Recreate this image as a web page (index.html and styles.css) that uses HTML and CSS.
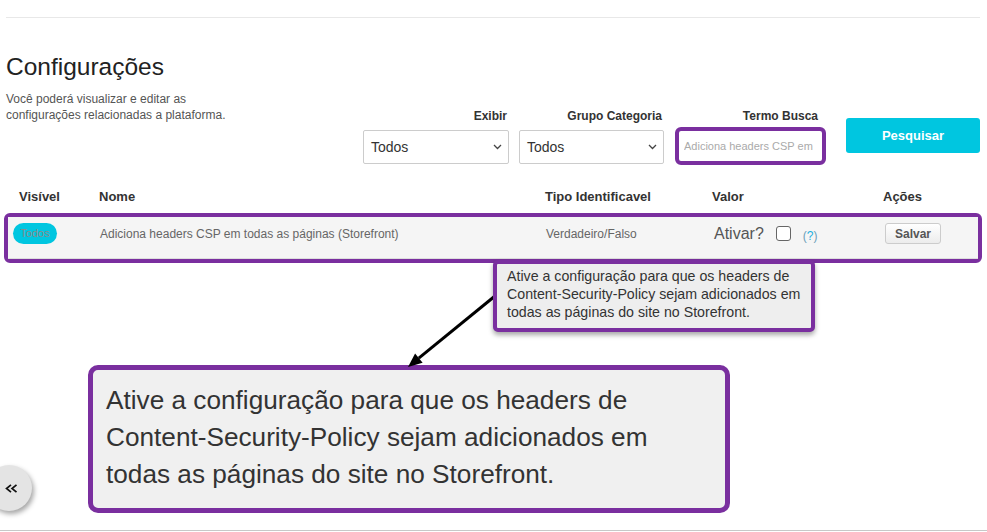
FILE: index.html
```html
<!DOCTYPE html>
<html lang="pt-BR">
<head>
<meta charset="utf-8">
<title>Configurações</title>
<link rel="stylesheet" href="styles.css">
</head>
<body>
<div class="page">
  <hr class="top-rule">
  <h1 class="title">Configurações</h1>
  <div class="intro-row">
    <p class="subtitle">Você poderá visualizar e editar as<br>configurações relacionadas a plataforma.</p>
    <div class="filters">
      <div class="field field-exibir">
        <label class="field-label">Exibir</label>
        <div class="select"><span>Todos</span><svg class="chev" width="9" height="6" viewBox="0 0 9 6"><path d="M1 1 L4.5 4.5 L8 1" fill="none" stroke="#444" stroke-width="1.3"/></svg></div>
      </div>
      <div class="field field-grupo">
        <label class="field-label">Grupo Categoria</label>
        <div class="select"><span>Todos</span><svg class="chev" width="9" height="6" viewBox="0 0 9 6"><path d="M1 1 L4.5 4.5 L8 1" fill="none" stroke="#444" stroke-width="1.3"/></svg></div>
      </div>
      <div class="field field-termo">
        <label class="field-label">Termo Busca</label>
        <div class="input-highlight"><input class="search-input" type="text" placeholder="Adiciona headers CSP em"></div>
      </div>
      <button class="btn-search">Pesquisar</button>
    </div>
  </div>

  <div class="table">
    <div class="thead grid">
      <div class="c1">Visível</div>
      <div class="c2">Nome</div>
      <div class="c3">Tipo Identificavel</div>
      <div class="c4">Valor</div>
      <div class="c5">Ações</div>
    </div>
    <div class="row-wrap">
      <div class="row grid">
        <div class="c1"><span class="pill">Todos</span></div>
        <div class="c2">Adiciona headers CSP em todas as páginas (Storefront)</div>
        <div class="c3">Verdadeiro/Falso</div>
        <div class="c4"><span class="ativar">Ativar?</span><span class="checkbox"></span><span class="help">(<b>?</b>)</span></div>
        <div class="c5"><button class="btn-save">Salvar</button></div>
      </div>
      <div class="tooltip">Ative a configuração para que os headers de<br>Content-Security-Policy sejam adicionados em<br>todas as páginas do site no Storefront.</div>
      <svg class="arrow" width="100" height="82" viewBox="0 0 100 82">
        <line x1="95" y1="6" x2="18.8" y2="68.2" stroke="#000" stroke-width="3"/>
        <polygon points="8,77 22.6,72.8 15.1,63.5" fill="#000"/>
      </svg>
    </div>
  </div>

  <div class="callout">Ative a configuração para que os headers de<br>Content-Security-Policy sejam adicionados em<br>todas as páginas do site no Storefront.</div>
</div>
<footer class="bottom-rule"></footer>
<button class="collapse" aria-label="Recolher"><svg width="13" height="9" viewBox="0 0 13 9"><path d="M6 0.8 L1.5 4.5 L6 8.2 M11.5 0.8 L7 4.5 L11.5 8.2" fill="none" stroke="#111" stroke-width="1.7"/></svg></button>
</body>
</html>
```

FILE: styles.css
```css
* { box-sizing: border-box; }
html, body { margin: 0; padding: 0; }
body {
  font-family: "Liberation Sans", Arial, sans-serif;
  color: #333;
  background: #fff;
  min-height: 100vh;
  display: flex;
  flex-direction: column;
  overflow: hidden;
}
.page { flex: 1; padding: 17px 7px 0 6px; }
.top-rule { margin: 0; border: 0; border-top: 1px solid #e8e8e8; height: 0; }
.title {
  margin: 35px 0 0;
  font-size: 24.5px;
  line-height: 28px;
  font-weight: normal;
  color: #222;
}
.intro-row { display: flex; align-items: flex-start; margin-top: 10px; }
.subtitle { flex: 1; margin: 0; font-size: 12px; line-height: 16px; color: #555; }
.filters { display: flex; align-items: flex-start; padding-top: 18px; }
.field { display: flex; flex-direction: column; }
.field-label {
  font-size: 12px;
  font-weight: bold;
  line-height: 15px;
  text-align: right;
  color: #333;
  padding-right: 2px;
}
.field-exibir { width: 146px; }
.field-grupo { width: 145px; margin-left: 10px; }
.field-termo { width: 151px; margin-left: 11px; }
.field-termo .field-label { padding-right: 8px; }
.select {
  margin-top: 6px;
  height: 34px;
  border: 1px solid #ccc;
  border-radius: 2px;
  background: #fff;
  display: flex;
  align-items: center;
  justify-content: space-between;
  padding: 0 6px 0 7px;
  font-size: 14px;
  color: #333;
}
.chev { display: block; }
.input-highlight {
  margin-top: 3px;
  height: 38px;
  border: 4px solid #7a2f9f;
  border-radius: 6px;
  background: #fff;
  padding-left: 5px;
  display: flex;
  align-items: center;
}
.search-input {
  border: 0;
  outline: none;
  width: 100%;
  height: 28px;
  padding: 0;
  font: 11px "Liberation Sans", Arial, sans-serif;
  color: #555;
  background: transparent;
}
.search-input::placeholder { color: #aaa; }
.btn-search {
  margin: 9px 0 0 20px;
  width: 134px;
  height: 35px;
  border: 0;
  border-radius: 3px;
  background: #00c6e0;
  color: #fff;
  font: bold 13px "Liberation Sans", Arial, sans-serif;
}

.table { margin-top: 24px; }
.grid {
  display: grid;
  grid-template-columns: 91px 446px 167px 171px 1fr;
  align-items: center;
}
.thead {
  padding: 0 2px;
  height: 16px;
  line-height: 16px;
  font-size: 13px;
  font-weight: bold;
  color: #333;
  margin-bottom: 8px;
}
.thead .c1 { padding-left: 11px; }
.row-wrap {
  position: relative;
  margin: 0 -2px;
  border: 4px solid #7a2f9f;
  border-radius: 6px;
}
.row {
  height: 42px;
  padding-bottom: 8px;
  background: #f5f5f5;
  border-bottom: 1px solid #ddd;
  font-size: 12px;
  color: #666;
}
.row .c1 { padding-left: 5px; }
.row .c2, .row .c3 { padding-left: 1px; }
.row .c4 { padding-left: 2px; display: flex; align-items: center; }
.row .c5 { padding-left: 2px; }
.pill {
  display: inline-block;
  width: 44px;
  height: 21px;
  line-height: 21px;
  border-radius: 11px;
  background: #00c6e0;
  color: #8a8a8a;
  font-size: 11px;
  text-align: center;
  vertical-align: middle;
}
.ativar { font-size: 16px; color: #555; }
.checkbox {
  width: 15px;
  height: 15px;
  border: 1.5px solid #666;
  border-radius: 3px;
  background: #fff;
  margin-left: 12px;
}
.help { margin: 4px 0 0 12px; font-size: 12px; color: #6c9fb8; }
.help b { font-weight: normal; color: #1cb0e0; }
.btn-save {
  width: 56px;
  height: 21px;
  padding: 0;
  border: 1px solid #ccc;
  border-radius: 3px;
  background: linear-gradient(#fff, #ececec);
  font: bold 12px "Liberation Sans", Arial, sans-serif;
  color: #555;
}

.tooltip {
  position: absolute;
  left: 485px;
  top: 43px;
  width: 322px;
  height: 72px;
  border: 4px solid #7a2f9f;
  border-radius: 5px;
  background: #eee;
  padding: 3px 4px 0 10px;
  font-size: 14.2px;
  line-height: 18px;
  color: #333;
  white-space: nowrap;
  box-shadow: 0 3px 5px rgba(0, 0, 0, 0.35);
  z-index: 2;
}
.arrow { position: absolute; left: 392px; top: 73px; }

.callout {
  margin: 102px 0 0 82px;
  width: 642px;
  height: 148px;
  border: 5px solid #7a2f9f;
  border-radius: 10px;
  background: #f0f0f0;
  padding: 12px 13px 0;
  font-size: 26.2px;
  line-height: 37px;
  color: #333;
}

.bottom-rule { border-top: 1px solid #c8c8c8; margin-bottom: 1px; }

.collapse {
  position: fixed;
  left: -14px;
  top: 465px;
  width: 46px;
  height: 46px;
  border: 0;
  border-radius: 50%;
  background: #e4e4e4;
  box-shadow: 2px 3px 5px rgba(0, 0, 0, 0.35);
  display: flex;
  align-items: center;
  justify-content: flex-end;
  padding: 0 14px 0 0;
}
.collapse svg { display: block; }
```
